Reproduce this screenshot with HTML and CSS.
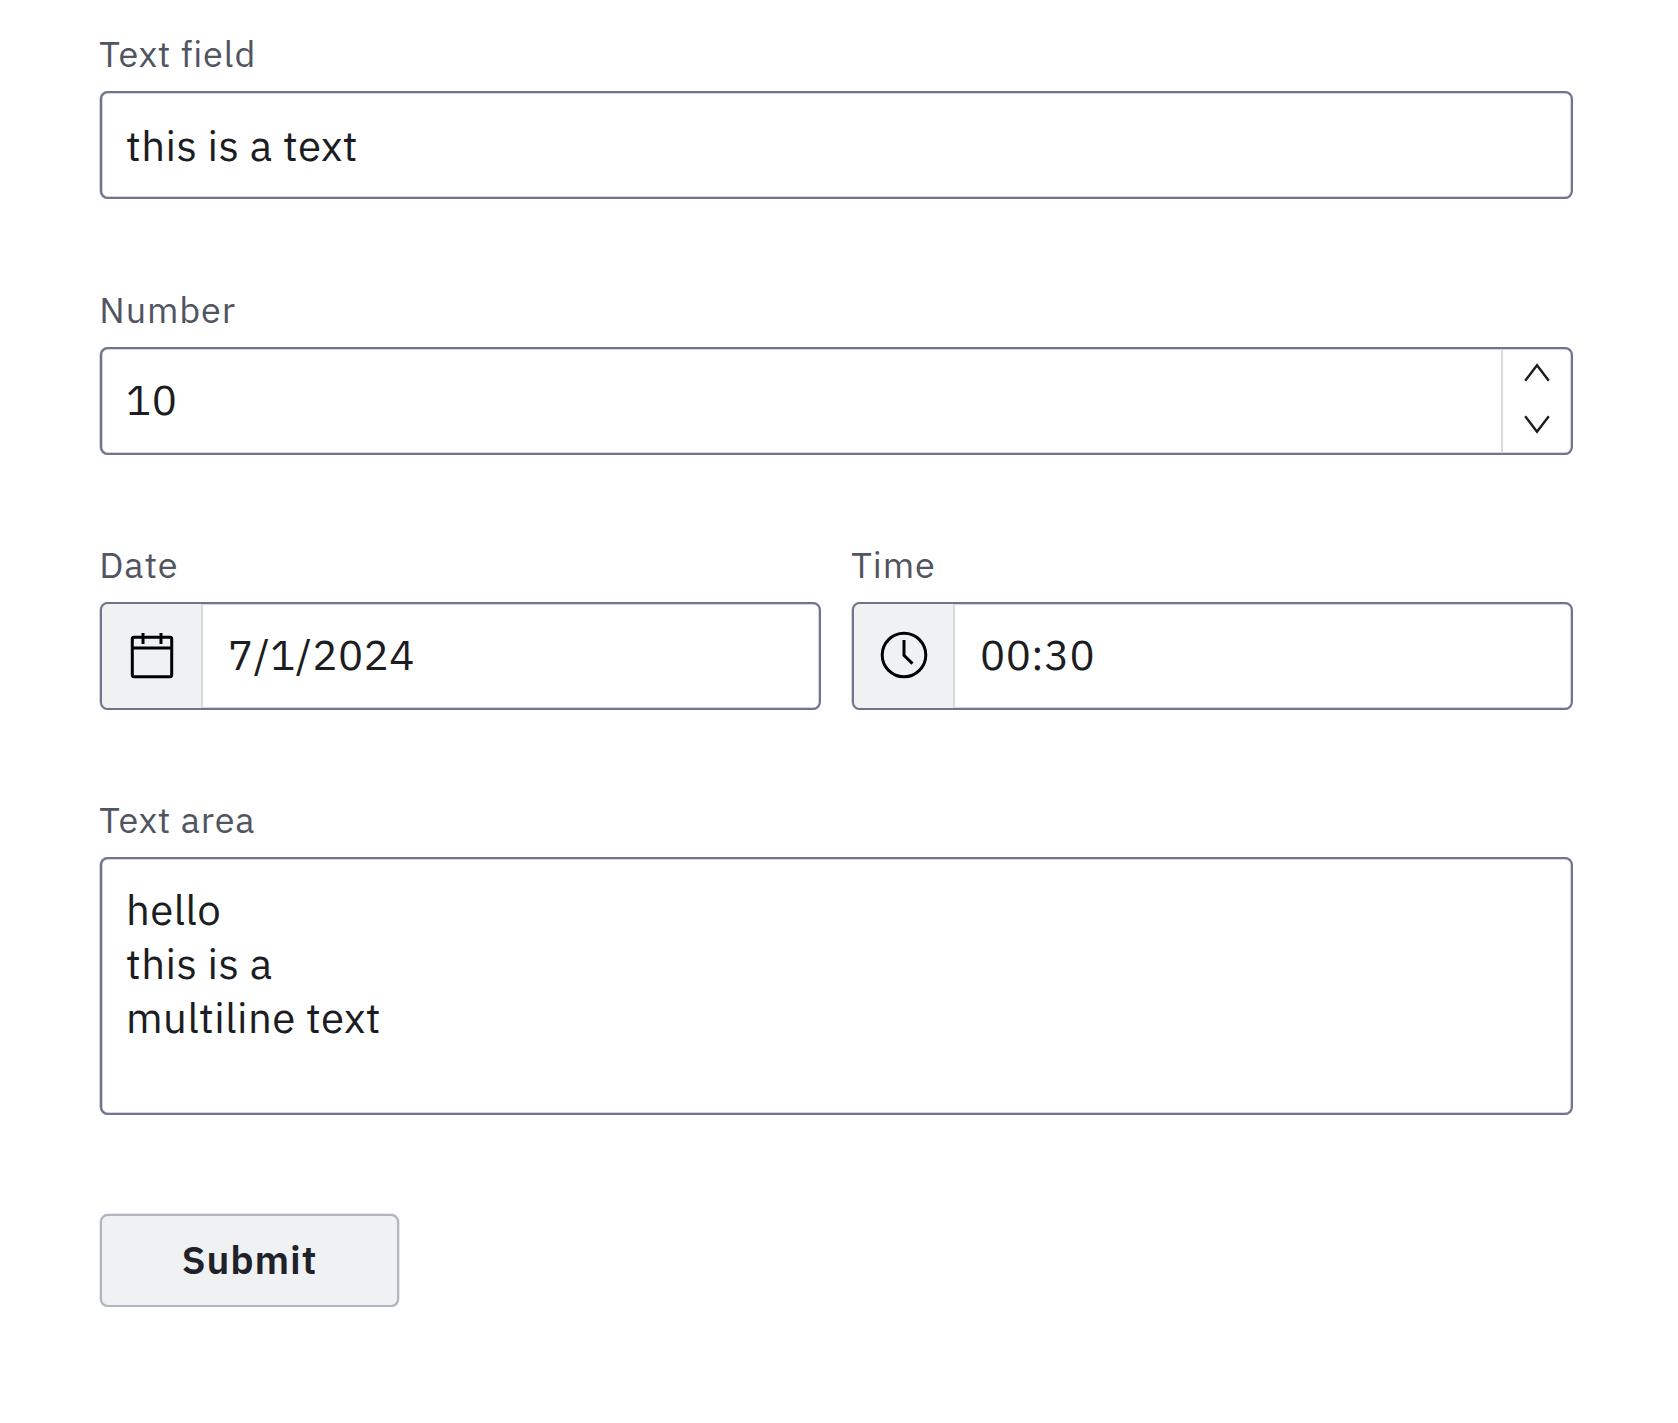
FILE: index.html
```html
<!DOCTYPE html>
<html lang="en">
<head>
<meta charset="utf-8">
<title>Form</title>
<link rel="stylesheet" href="styles.css">
</head>
<body>
<form class="form">
  <div class="field">
    <label class="label" for="text">Text field</label>
    <div class="control"><input class="input" id="text" type="text" value="this is a text"></div>
  </div>
  <div class="field field-number">
    <label class="label" for="number">Number</label>
    <div class="control">
      <input class="input input-raised" id="number" type="text" value="10">
      <div class="stepper">
        <svg class="chevron" viewBox="0 0 26 19"><path d="M1.2 17.8 13 2.2 24.8 17.8"/></svg>
        <svg class="chevron" viewBox="0 0 26 19"><path d="M1.2 1.2 13 16.8 24.8 1.2"/></svg>
      </div>
    </div>
  </div>
  <div class="row">
    <div class="field">
      <label class="label" for="date">Date</label>
      <div class="control">
        <div class="adornment">
          <svg class="icon" viewBox="0 0 48 48"><rect x="4.3" y="6.3" width="39.4" height="39.4" rx="1.6"/><path d="M4 17h40M15 2v11M33 2v11"/></svg>
        </div>
        <input class="input input-raised input-adorned" id="date" type="text" value="7/1/2024">
      </div>
    </div>
    <div class="field">
      <label class="label" for="time">Time</label>
      <div class="control">
        <div class="adornment">
          <svg class="icon" viewBox="0 0 48 48"><circle cx="24" cy="24" r="21.8"/><path d="M24 9v15.4l8.5 8.2"/></svg>
        </div>
        <input class="input input-raised input-adorned" id="time" type="text" value="00:30">
      </div>
    </div>
  </div>
  <div class="field field-area">
    <label class="label" for="area">Text area</label>
    <div class="control control-area"><textarea class="input textarea" id="area">hello
this is a
multiline text</textarea></div>
  </div>
  <button class="submit" type="button">Submit</button>
</form>
</body>
</html>
```
FILE: styles.css
```css
* { box-sizing: border-box; }
body {
  margin: 0;
  background: #fff;
  font-family: "IBM Plex Sans", "Noto Sans CJK SC", sans-serif;
}
.form {
  display: flex;
  flex-direction: column;
  align-items: flex-start;
  width: 1473px;
  margin-left: 100px;
  padding-top: 31px;
}
.field { width: 100%; }
.field-number { margin-top: 88px; }
.label {
  display: block;
  height: 60px;
  color: #515561;
  font-size: 36px;
  line-height: 46px;
  letter-spacing: 0.88px;
  text-indent: -0.7px;
}
.control {
  display: flex;
  height: 108px;
  border: 2px solid #6f768b;
  border-radius: 8px;
  background: #fff;
  box-shadow: -0.5px 0 0 0 rgba(111, 118, 139, 0.6), inset 0 0 0 0.5px rgba(111, 118, 139, 0.6);
  overflow: hidden;
}
.input {
  flex: 1;
  min-width: 0;
  margin: 0;
  padding: 0 24px;
  border: 0;
  outline: 0;
  background: none;
  color: #1c1d22;
  font-family: inherit;
  font-size: 42px;
  letter-spacing: 0.43px;
}
.input-raised { padding-bottom: 3px; }
.input-adorned { padding-left: 25px; }
.stepper {
  display: flex;
  flex-direction: column;
  align-items: center;
  justify-content: space-between;
  width: 70px;
  padding: 14px 0 19px;
  border-left: 2px solid #d8d9dc;
}
.chevron {
  width: 26px;
  height: 19px;
  fill: none;
  stroke: #1c1d22;
  stroke-width: 2.4;
}
.row {
  display: grid;
  grid-template-columns: 1fr 1fr;
  gap: 31px;
  width: 100%;
  margin-top: 87px;
}
.adornment {
  display: flex;
  align-items: center;
  justify-content: center;
  width: 101px;
  padding: 0 0 3px 0;
  border-right: 2px solid #d8d9dc;
  background: #f0f1f3;
}
.icon {
  width: 48px;
  height: 48px;
  fill: none;
  stroke: #000;
  stroke-width: 3;
}
.field-area { margin-top: 87px; }
.control-area { height: 258px; }
.textarea {
  padding-top: 24px;
  line-height: 54px;
  resize: none;
}
.submit {
  width: 299px;
  height: 93px;
  margin-top: 99px;
  padding: 0 0 3px 0;
  border: 2px solid #b2b4c0;
  border-radius: 8px;
  background: #f0f1f3;
  box-shadow: 0 0 0 0.5px rgba(178, 180, 192, 0.6);
  color: #20222a;
  font-family: inherit;
  font-size: 39px;
  font-weight: 600;
  letter-spacing: 0.86px;
}
```
